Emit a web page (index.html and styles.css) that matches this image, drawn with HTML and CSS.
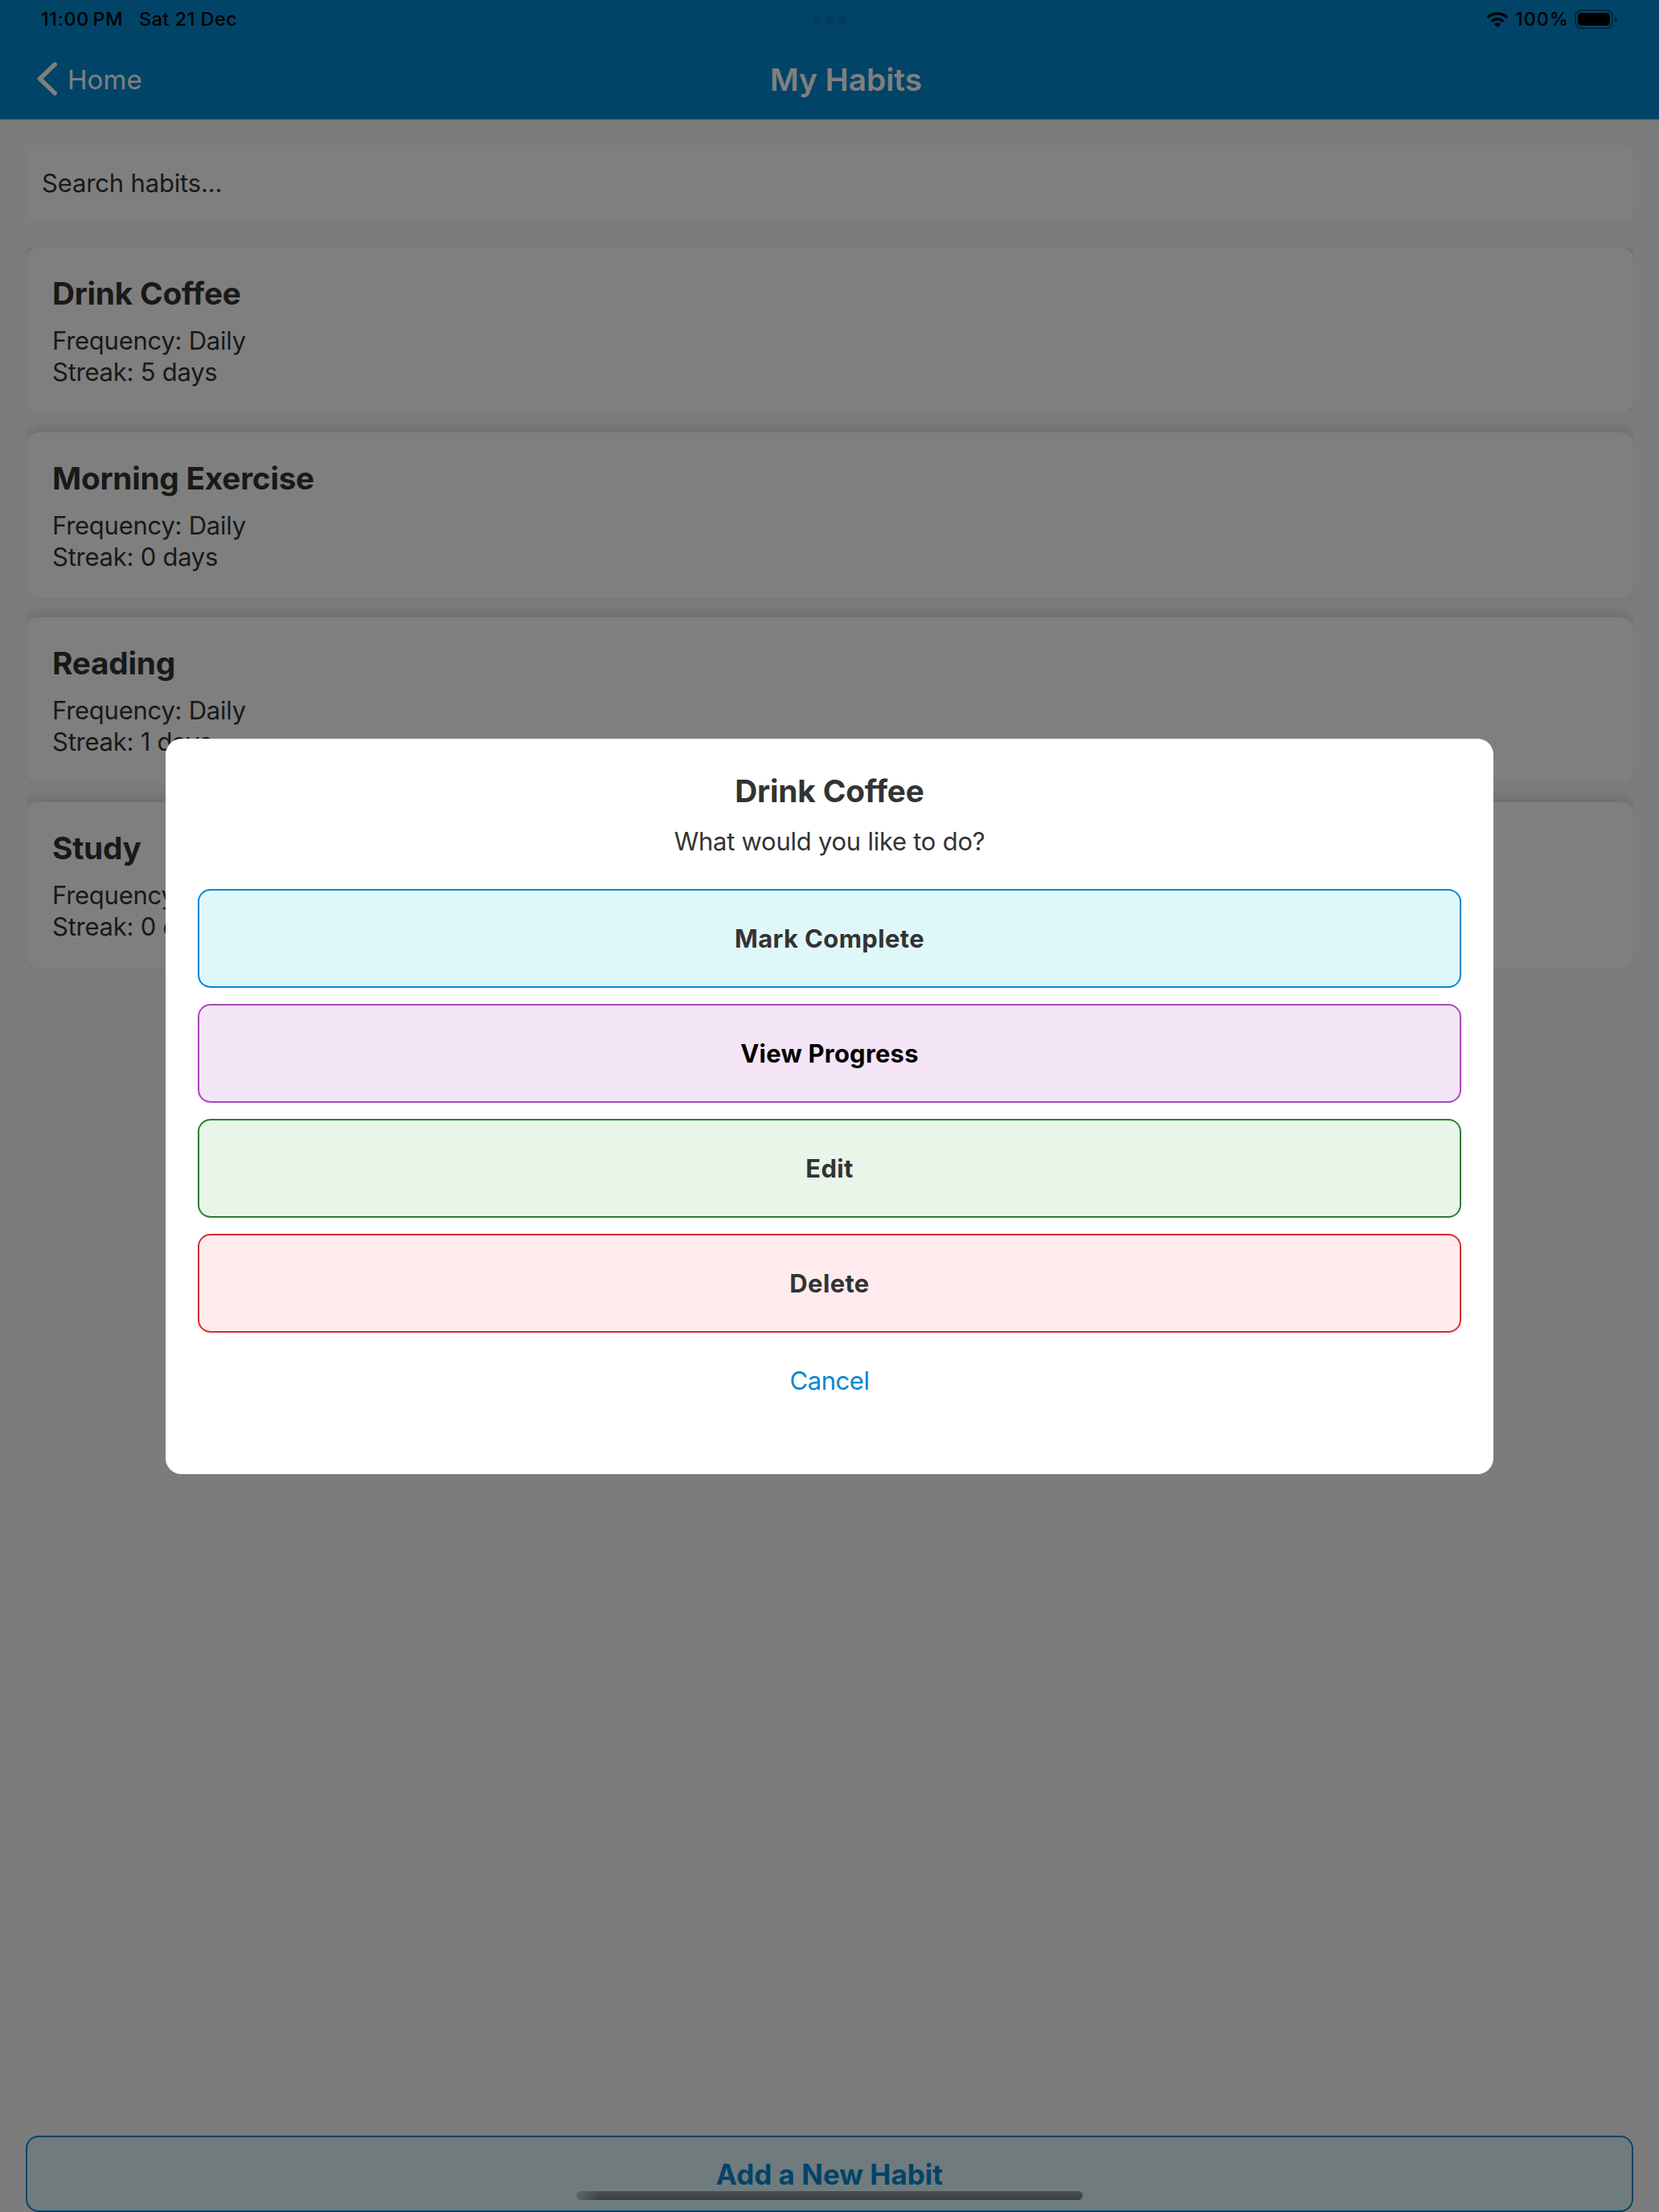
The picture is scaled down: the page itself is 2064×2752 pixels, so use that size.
FILE: index.html
```html
<!DOCTYPE html>
<html lang="en">
<head>
<meta charset="utf-8">
<title>My Habits</title>
<link rel="stylesheet" href="styles.css">
</head>
<body>
<div class="app">
  <header class="header">
    <div class="status">
      <div class="status-left">
        <span class="time">11:00 PM</span>
        <span class="date">Sat 21 Dec</span>
      </div>
      <div class="dots"><i></i><i></i><i></i></div>
      <div class="status-right">
        <svg class="wifi" viewBox="0 0 28 20" width="28" height="20">
          <path d="M14 20 L9.9 15.9 A6 6 0 0 1 18.1 15.9 Z"/>
          <path d="M5.6 11.5 A12 12 0 0 1 22.4 11.5 L20 13.9 A8.6 8.6 0 0 0 8 13.9 Z"/>
          <path d="M0.7 6.6 A19 19 0 0 1 27.3 6.6 L24.9 9 A15.6 15.6 0 0 0 3.1 9 Z"/>
        </svg>
        <span class="percent">100%</span>
        <svg class="battery" viewBox="0 0 54 24" width="54" height="24">
          <rect x="1" y="1" width="46" height="22" rx="7" fill="none" stroke="#000" stroke-opacity=".4" stroke-width="2"/>
          <rect x="4" y="4" width="40" height="16" rx="4.5"/>
          <path d="M50 8 C52.2 8.8 53 10.2 53 12 C53 13.8 52.2 15.2 50 16 Z" fill-opacity=".45"/>
        </svg>
      </div>
    </div>
    <nav class="nav">
      <a class="back">
        <svg viewBox="0 0 26 42" width="26" height="42"><path d="M22.3 3 L3.6 21 L22.3 39" fill="none" stroke="#fff" stroke-width="5.4" stroke-linecap="round" stroke-linejoin="miter"/></svg>
        <span>Home</span>
      </a>
      <h1 class="nav-title">My Habits</h1>
      <div></div>
    </nav>
  </header>

  <main class="content">
    <div class="search">Search habits...</div>
    <div class="list">
      <article class="card"><h2>Drink Coffee</h2><p>Frequency: Daily</p><p>Streak: 5 days</p></article>
      <article class="card"><h2>Morning Exercise</h2><p>Frequency: Daily</p><p>Streak: 0 days</p></article>
      <article class="card"><h2>Reading</h2><p>Frequency: Daily</p><p>Streak: 1 days</p></article>
      <article class="card"><h2>Study</h2><p>Frequency: Daily</p><p>Streak: 0 days</p></article>
    </div>
    <button class="add">Add a New Habit</button>
  </main>
</div>

<div class="overlay">
  <section class="modal">
    <h2 class="modal-title">Drink Coffee</h2>
    <p class="modal-text">What would you like to do?</p>
    <div class="actions">
      <button class="action complete">Mark Complete</button>
      <button class="action progress">View Progress</button>
      <button class="action edit">Edit</button>
      <button class="action delete">Delete</button>
    </div>
    <button class="cancel">Cancel</button>
  </section>
</div>
<div class="home-indicator"></div>
</body>
</html>
```
FILE: styles.css
```css
* { box-sizing: border-box; margin: 0; padding: 0; }

body {
  height: 2752px;
  overflow: hidden;
  background: #f9f9f9;
  color: #333;
  font-family: Inter, "Liberation Sans", sans-serif;
  font-size: 31px;
}

button { font-family: inherit; color: inherit; }

.app {
  display: flex;
  flex-direction: column;
  height: 2752px;
}

/* Header */
.header {
  height: 148px;
  background: #0288d1;
  box-shadow: 0 1px 1px rgba(0, 0, 0, .3);
}

.status {
  display: grid;
  grid-template-columns: 1fr auto 1fr;
  align-items: center;
  height: 48px;
  padding: 0 51px;
  color: #000;
  font-size: 23.3px;
  font-weight: 500;
  line-height: 48px;
}

.status-left { display: flex; gap: 20px; }
.time { letter-spacing: .7px; word-spacing: -2.4px; }
.date { letter-spacing: .55px; }

.dots { display: flex; gap: 6px; }
.dots i {
  width: 10px;
  height: 10px;
  border-radius: 50%;
  background: #0077c0;
}

.status-right {
  display: flex;
  align-items: center;
  justify-content: flex-end;
}
.percent { margin: 0 7px 0 8px; letter-spacing: 1px; }

.nav {
  display: grid;
  grid-template-columns: 1fr auto 1fr;
  align-items: center;
  height: 100px;
  padding: 0 5px 0 46px;
  color: #fff;
}

.back {
  display: flex;
  align-items: center;
  gap: 12px;
  font-size: 33px;
  letter-spacing: .1px;
}
.back svg { margin-bottom: 1px; }
.back span { line-height: 44px; margin-top: 1px; }

.nav-title {
  font-size: 38.8px;
  font-weight: 600;
  line-height: 48px;
  margin-top: 2px;
}

/* Content */
.content {
  flex: 1;
  display: flex;
  flex-direction: column;
  padding: 32px 32px 0;
}

.search {
  height: 96px;
  padding-left: 20px;
  border-radius: 16px;
  background: #fff;
  line-height: 96px;
  letter-spacing: -.16px;
  margin-bottom: 32px;
}

.list {
  flex: 1;
  display: flex;
  flex-direction: column;
  gap: 24px;
  overflow: hidden;
}

.card {
  height: 206px;
  padding: 33px 32px 0 33px;
  border-radius: 16px;
  background: #fff;
  box-shadow: 0 -6px 16px rgba(0, 12, 8, .13);
}

.card h2 {
  font-size: 38.8px;
  font-weight: 700;
  line-height: 48px;
  letter-spacing: -.25px;
  margin-bottom: 15px;
}

.card p {
  line-height: 39px;
  letter-spacing: -.25px;
}

.add {
  height: 95px;
  border: 2px solid #0288d1;
  border-radius: 16px;
  background: #e0f7fa;
  color: #0288d1;
  font-size: 35px;
  font-weight: 700;
}

/* Action dialog */
.overlay {
  position: fixed;
  inset: 0;
  display: flex;
  align-items: center;
  justify-content: center;
  background: rgba(0, 0, 0, .5);
}

.modal {
  display: flex;
  flex-direction: column;
  width: 1652px;
  height: 915px;
  padding: 41px 40px 40px;
  border-radius: 20px;
  background: #fff;
  text-align: center;
}

.modal-title {
  font-size: 38.8px;
  font-weight: 700;
  line-height: 48px;
  letter-spacing: -.18px;
  margin-bottom: 19px;
}

.modal-text {
  line-height: 40px;
  letter-spacing: -.25px;
  margin-bottom: 39px;
}

.actions { display: grid; gap: 20px; }

.action {
  height: 123px;
  border: 2px solid;
  border-radius: 16px;
  font-size: 31px;
  font-weight: 700;
  letter-spacing: .35px;
}

.complete { background: #e0f7fa; border-color: #0288d1; }
.progress { background: #f3e5f5; border-color: #ab47bc; color: #000; letter-spacing: .2px; }
.edit { background: #e8f5e9; border-color: #2e7d32; }
.delete { background: #ffebee; border-color: #d32f2f; }

.cancel {
  margin-top: 40px;
  border: 0;
  background: none;
  color: #0288d1;
  font-size: 31px;
  line-height: 40px;
  letter-spacing: -.43px;
}

.home-indicator {
  position: fixed;
  left: 717px;
  top: 2726px;
  width: 630px;
  height: 11px;
  border-radius: 6px;
  background:
    linear-gradient(90deg, rgba(100, 108, 108, .8), rgba(80, 84, 84, 0) 30px),
    linear-gradient(#4b5050, #3b3d3d);
}
```
